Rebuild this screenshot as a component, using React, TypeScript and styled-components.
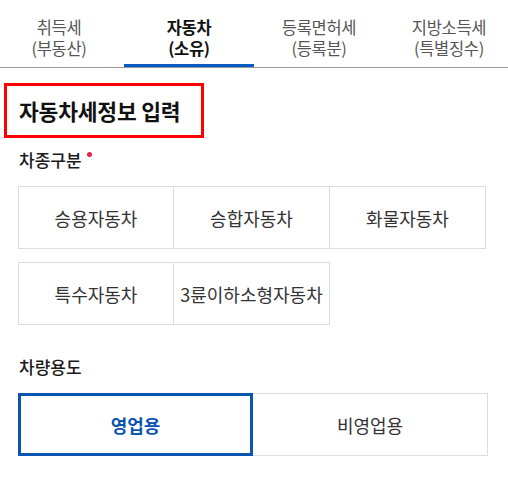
import * as React from 'react';
import styled, { createGlobalStyle } from 'styled-components';

const GlobalStyle = createGlobalStyle`
  html, body {
    margin: 0;
    padding: 0;
    background: #fff;
  }
  body {
    font-family: 'Noto Sans CJK KR', 'Noto Sans', sans-serif;
    color: #222;
  }
  * {
    box-sizing: border-box;
  }
`;

const tabs = [
  { top: '취득세', bottom: '(부동산)' },
  { top: '자동차', bottom: '(소유)' },
  { top: '등록면허세', bottom: '(등록분)' },
  { top: '지방소득세', bottom: '(특별징수)' },
];

const carTypes = ['승용자동차', '승합자동차', '화물자동차', '특수자동차', '3륜이하소형자동차'];
const usages = ['영업용', '비영업용'];

export default function App() {
  const [tab, setTab] = React.useState(1);
  const [carType, setCarType] = React.useState<number | null>(null);
  const [usage, setUsage] = React.useState(0);

  return (
    <>
      <GlobalStyle />
      <StyledTabNav>
        <StyledTabRow>
          {tabs.map((t, i) => (
            <StyledTab key={t.top} active={i === tab} onClick={() => setTab(i)}>
              <StyledTabLine>{t.top}</StyledTabLine>
              <StyledTabLine>{t.bottom}</StyledTabLine>
            </StyledTab>
          ))}
        </StyledTabRow>
      </StyledTabNav>

      <StyledBody>
        <StyledTitleBox>
          <StyledTitle>자동차세정보 입력</StyledTitle>
        </StyledTitleBox>

        <StyledLabel>
          차종구분
          <StyledRequired />
        </StyledLabel>
        <StyledChoiceGrid cols={3}>
          {carTypes.map((name, i) => (
            <StyledChoice
              key={name}
              cols={3}
              selected={carType === i}
              onClick={() => setCarType(i)}
            >
              {name}
            </StyledChoice>
          ))}
        </StyledChoiceGrid>

        <StyledLabel className="usage">차량용도</StyledLabel>
        <StyledChoiceGrid cols={2}>
          {usages.map((name, i) => (
            <StyledChoice
              key={name}
              cols={2}
              selected={usage === i}
              onClick={() => setUsage(i)}
            >
              {name}
            </StyledChoice>
          ))}
        </StyledChoiceGrid>
      </StyledBody>
    </>
  );
}

const StyledTabNav = styled.nav`
  width: 508px;
  height: 68px;
  overflow: hidden;
  border-bottom: 1px solid #9a9a9a;
`;

const StyledTabRow = styled.div`
  display: flex;
  margin-left: -6px;
`;

const StyledTab = styled.div<{ active: boolean }>`
  flex: 0 0 130px;
  height: 67px;
  display: flex;
  flex-direction: column;
  align-items: center;
  padding-top: 17px;
  font-size: 16.5px;
  letter-spacing: -0.3px;
  color: ${p => (p.active ? '#111' : '#555')};
  font-weight: ${p => (p.active ? 700 : 400)};
  border-bottom: 3px solid ${p => (p.active ? '#0a5cc2' : 'transparent')};
  cursor: pointer;
`;

const StyledTabLine = styled.span`
  display: block;
  height: 21px;
  line-height: 21px;
  white-space: nowrap;
`;

const StyledBody = styled.div`
  padding: 15px 0 0 18px;
`;

const StyledTitleBox = styled.div`
  width: 200px;
  height: 55px;
  margin-left: -14px;
  border: 3px solid #ff0000;
  display: flex;
  align-items: center;
  padding-left: 12px;
`;

const StyledTitle = styled.h2`
  margin: 0;
  font-size: 21.5px;
  font-weight: 700;
  color: #111;
  letter-spacing: -0.2px;
  white-space: nowrap;
`;

const StyledLabel = styled.div`
  margin: 11px 0 15px 1px;
  font-size: 17px;
  line-height: 22px;
  font-weight: 500;
  color: #1a1a1a;
  display: flex;
  align-items: flex-start;

  &.usage {
    margin-top: 31px;
  }
`;

const StyledRequired = styled.span`
  width: 5px;
  height: 5px;
  border-radius: 50%;
  background: #e8204a;
  margin: 3px 0 0 5px;
`;

const StyledChoiceGrid = styled.div<{ cols: number }>`
  display: grid;
  grid-template-columns: repeat(${p => p.cols}, ${p => (p.cols === 3 ? 156 : 235)}px);
  row-gap: 13px;
`;

const StyledChoice = styled.button<{ cols: number; selected: boolean }>`
  height: 63px;
  background: #fff;
  font-family: inherit;
  font-size: 18px;
  letter-spacing: 0;
  color: ${p => (p.selected ? '#0a55b0' : '#333')};
  font-weight: ${p => (p.selected ? 700 : 400)};
  border: ${p => (p.selected ? '3px solid #0a55b0' : '1px solid #dcdcdc')};
  cursor: pointer;
  padding: 0;
  white-space: nowrap;

  &:nth-child(${p => p.cols}n + 2),
  &:nth-child(${p => p.cols}n + 3) {
    ${p => (p.selected ? '' : 'border-left: none;')}
  }
`;
